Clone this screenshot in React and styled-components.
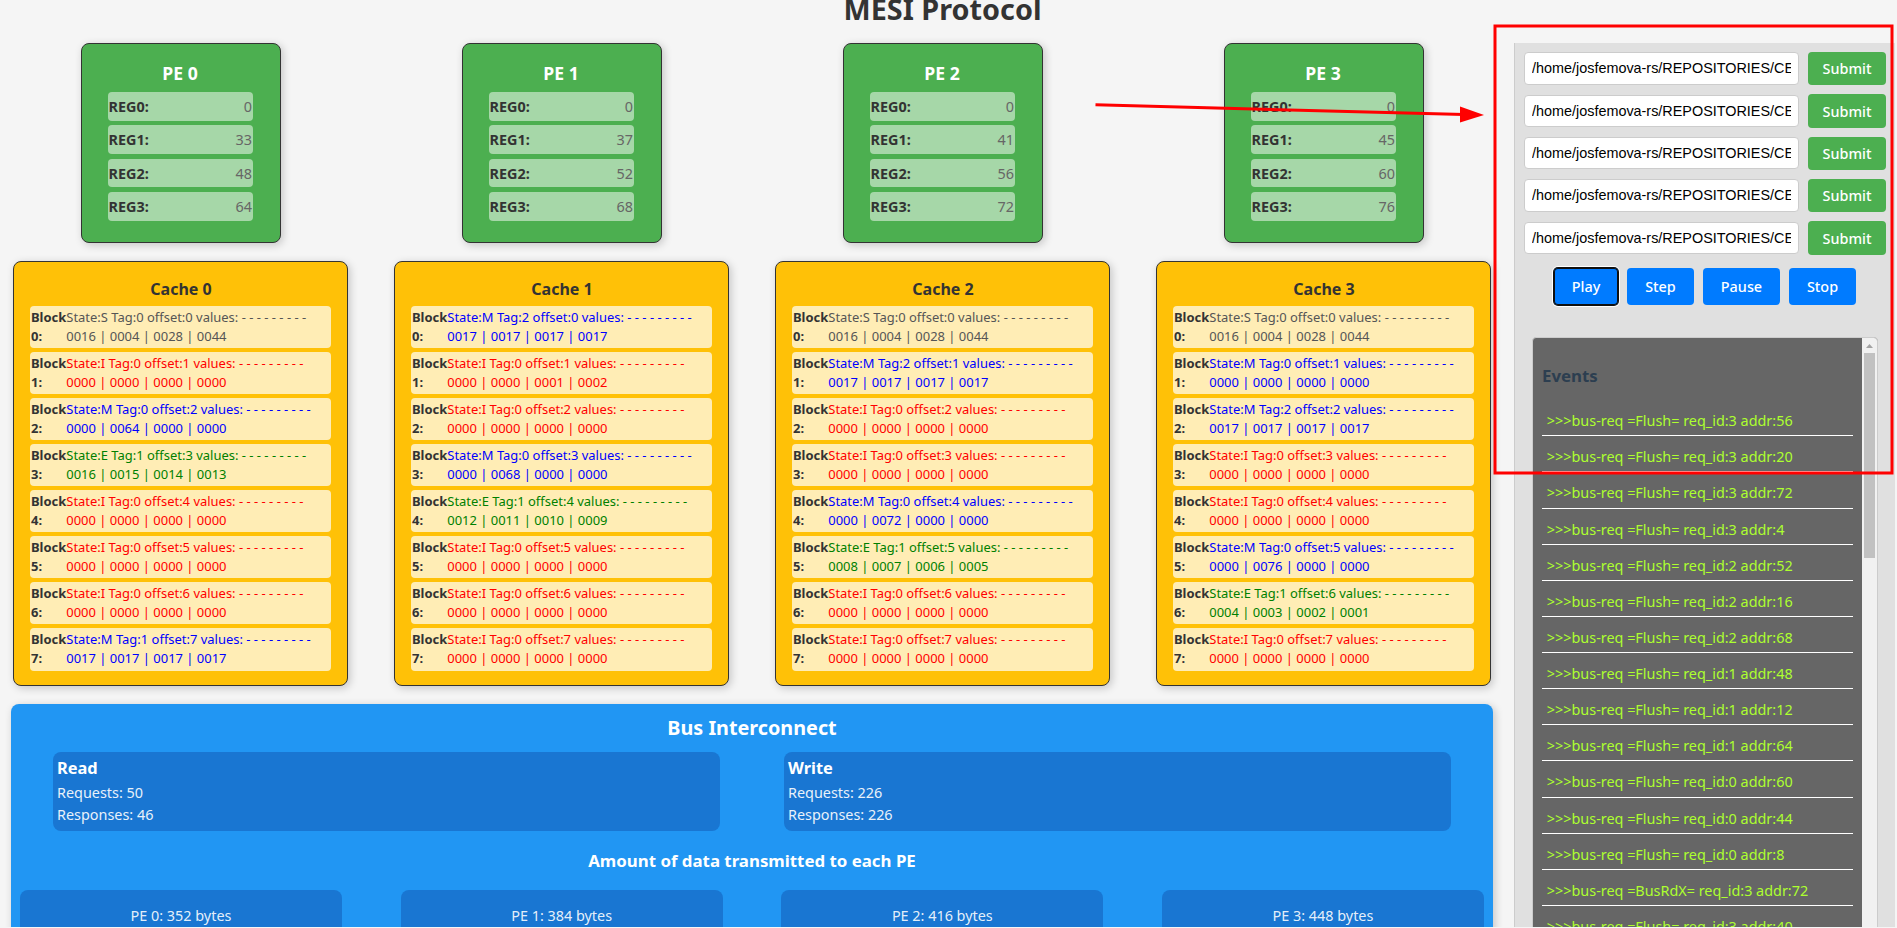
import React from "react";
import styled, { createGlobalStyle } from "styled-components";

const GlobalStyle = createGlobalStyle`
  *, *::before, *::after { box-sizing: border-box; }
  body {
    margin: 0;
    background: #f5f5f5;
    color: #333;
    font-family: "Noto Sans", sans-serif;
    overflow: hidden;
  }
  h1, h2, h3, p, ul { margin: 0; padding: 0; }
`;

const Page = styled.div`
  position: relative;
  width: 1897px;
  height: 928px;
  overflow: hidden;
  border-bottom: 1px solid #f5f5f5;
`;

const Title = styled.h1`
  width: 1885px;
  height: 43px;
  font-size: 28.8px;
  line-height: 40px;
  text-align: center;
  margin-top: -11px;
  margin-bottom: 11px;
`;

const Columns = styled.div`
  display: flex;
  align-items: flex-start;
`;

const Main = styled.main`
  width: 1482px;
  margin-left: 11px;
`;

const Processors = styled.section`
  display: flex;
  gap: 46px;
  padding-left: 2px;
  width: 1490px;
`;

const Processor = styled.article`
  flex: 0 0 335px;
  display: flex;
  flex-direction: column;
  align-items: center;
  gap: 18px;
`;

const Card = styled.div`
  border: 1px solid #333;
  border-radius: 8px;
  box-shadow: 2px 2px 8px rgba(0, 0, 0, 0.2);
`;

const PeCard = styled(Card)`
  width: 200px;
  height: 200px;
  padding: 16px 27px 0 26px;
  background: #4caf50;
`;

const PeTitle = styled.h2`
  height: 32.1px;
  font-size: 17.6px;
  line-height: 26px;
  color: #fff;
  text-align: center;
`;

const Register = styled.div`
  display: flex;
  justify-content: space-between;
  align-items: center;
  height: 28.6px;
  margin-bottom: 4.8px;
  padding: 0 0.5px 0 1px;
  border-radius: 4px;
  background: rgba(255, 255, 255, 0.5);
  font-size: 14.4px;
  color: #666;

  b { color: #333; }
`;

const CacheCard = styled(Card)`
  width: 335px;
  height: 425px;
  padding: 14px 16px 0;
  background: #ffc107;
`;

const CacheTitle = styled.h2`
  height: 29.8px;
  padding-left: 1px;
  font-size: 16px;
  line-height: 27px;
  text-align: center;
`;

const stateColors = { S: "#555", I: "#ff0000", M: "#0000ff", E: "#008000" };

const Block = styled.div`
  display: flex;
  height: 42.5px;
  margin-bottom: 3.54px;
  padding: 2px 1px;
  border-radius: 4px;
  background: rgba(255, 255, 255, 0.7);
  font-size: 12.96px;
  line-height: 19.2px;
`;

const BlockLabel = styled.b`
  flex: 0 0 35.3px;
`;

const BlockValue = styled.span`
  color: ${(p) => stateColors[p.$state]};
  white-space: nowrap;
`;

const Bus = styled.section`
  margin-top: 18px;
  height: 300px;
  padding: 8px 9px 0;
  border-radius: 8px;
  background: #2196f3;
  box-shadow: 2px 2px 8px rgba(0, 0, 0, 0.2);
  color: #fff;
`;

const BusTitle = styled.h2`
  height: 40px;
  font-size: 19.8px;
  line-height: 31px;
  text-align: center;
`;

const Traffic = styled.div`
  display: flex;
  gap: 64px;
  padding: 0 33px;
`;

const TrafficPanel = styled.div`
  flex: 1;
  height: 79px;
  padding: 4px;
  border-radius: 8px;
  background: #1976d2;
  font-size: 14.4px;
  line-height: 22px;

  h3 { height: 26px; font-size: 16.4px; line-height: 24px; }
  p { opacity: 0.9; }
`;

const TransferTitle = styled.h3`
  height: 59px;
  font-size: 16.85px;
  line-height: 60px;
  text-align: center;
`;

const Transfers = styled.div`
  display: flex;
  justify-content: space-between;
`;

const Transfer = styled.div`
  width: 322px;
  height: 60px;
  border-radius: 8px;
  background: #1976d2;
  color: rgba(255, 255, 255, 0.9);
  font-size: 14.4px;
  line-height: 52px;
  text-align: center;
`;

const Sidebar = styled.aside`
  width: 381px;
  height: 900px;
  margin-left: 21px;
  border-left: 1px solid #ccc;
  background: #e0e0e0;
`;

const PathForms = styled.div`
  display: flex;
  flex-direction: column;
  gap: 8.95px;
  padding: 9px 9px 0;
`;

const PathRow = styled.form`
  display: flex;
  justify-content: space-between;
  align-items: flex-start;
  height: 33.4px;
`;

const PathInput = styled.input`
  width: 275px;
  height: 32.4px;
  margin-top: 0.3px;
  padding: 0 7px;
  border: 1px solid #ccc;
  border-radius: 4px;
  background: #fff;
  color: #000;
  font: 14.4px "Liberation Sans", Arial, sans-serif;
  outline: none;
`;

const Button = styled.button`
  border: 0;
  border-radius: 4px;
  padding: 0;
  color: #fff;
  font: 500 14.4px "Noto Sans", sans-serif;
`;

const SubmitButton = styled(Button)`
  width: 78px;
  height: 33.4px;
  background: #4caf50;
`;

const Controls = styled.div`
  display: flex;
  gap: 9px;
  margin: 13.2px 0 0 39px;
`;

const ControlButton = styled(Button)`
  width: ${(p) => p.$width}px;
  height: 37px;
  background: #007bff;
  ${(p) => p.$focused && "box-shadow: 0 0 0 1px #101010, 0 0 0 2px #fff, inset 0 0 0 1px #101010;"}
`;

const EventPanel = styled.section`
  display: flex;
  width: 346px;
  height: 620px;
  margin: 32px 0 0 17px;
  border: 1px solid #ccc;
  border-radius: 4px;
  overflow: hidden;
  background: #666;
`;

const EventBody = styled.div`
  flex: 1;
  padding: 0 9px;
`;

const EventTitle = styled.h3`
  height: 62.3px;
  padding-top: 24px;
  color: #2c3e50;
  font-size: 16.85px;
  line-height: 28px;
`;

const EventItem = styled.li`
  height: 36.13px;
  padding-left: 4.8px;
  border-bottom: 1px solid #fff;
  color: #adff2f;
  font-size: 14.4px;
  line-height: 41.4px;
  list-style: none;
`;

const ScrollTrack = styled.div`
  width: 15px;
  background: #f1f1f1;
  display: flex;
  flex-direction: column;
  align-items: center;
`;

const ScrollArrow = styled.svg`
  display: block;
  width: 15px;
  height: 15px;
`;

const ScrollThumb = styled.div`
  width: 11px;
  height: 205px;
  background: #c1c1c1;
`;

const Annotation = styled.svg`
  position: absolute;
  inset: 0;
  pointer-events: none;
`;

const PATH = "/home/josfemova-rs/REPOSITORIES/CE4302-MESI/program.txt";

const processors = [
  { regs: [0, 33, 48, 64], bytes: 352, blocks: ["S0 16 4 28 44", "I0 0 0 0 0", "M0 0 64 0 0", "E1 16 15 14 13", "I0 0 0 0 0", "I0 0 0 0 0", "I0 0 0 0 0", "M1 17 17 17 17"] },
  { regs: [0, 37, 52, 68], bytes: 384, blocks: ["M2 17 17 17 17", "I0 0 0 1 2", "I0 0 0 0 0", "M0 0 68 0 0", "E1 12 11 10 9", "I0 0 0 0 0", "I0 0 0 0 0", "I0 0 0 0 0"] },
  { regs: [0, 41, 56, 72], bytes: 416, blocks: ["S0 16 4 28 44", "M2 17 17 17 17", "I0 0 0 0 0", "I0 0 0 0 0", "M0 0 72 0 0", "E1 8 7 6 5", "I0 0 0 0 0", "I0 0 0 0 0"] },
  { regs: [0, 45, 60, 76], bytes: 448, blocks: ["S0 16 4 28 44", "M0 0 0 0 0", "M2 17 17 17 17", "I0 0 0 0 0", "I0 0 0 0 0", "M0 0 76 0 0", "E1 4 3 2 1", "I0 0 0 0 0"] },
];

const events = [
  ["Flush", 3, 56], ["Flush", 3, 20], ["Flush", 3, 72], ["Flush", 3, 4],
  ["Flush", 2, 52], ["Flush", 2, 16], ["Flush", 2, 68], ["Flush", 1, 48],
  ["Flush", 1, 12], ["Flush", 1, 64], ["Flush", 0, 60], ["Flush", 0, 44],
  ["Flush", 0, 8], ["BusRdX", 3, 72], ["Flush", 3, 40],
];

function CacheBlock({ data, index }) {
  const [head, ...words] = data.split(" ");
  return (
    <Block>
      <BlockLabel>Block {index}:</BlockLabel>
      <BlockValue $state={head[0]}>
        {`State:${head[0]} Tag:${head[1]} offset:${index} values: - - - - - - - - -`}
        <br />
        {words.map((w) => w.padStart(4, "0")).join(" | ")}
      </BlockValue>
    </Block>
  );
}

export default function App() {
  return (
    <Page>
      <GlobalStyle />
      <Title>MESI Protocol</Title>
      <Columns>
        <Main>
          <Processors>
            {processors.map((pe, i) => (
              <Processor key={i}>
                <PeCard>
                  <PeTitle>PE {i}</PeTitle>
                  {pe.regs.map((v, r) => (
                    <Register key={r}><b>REG{r}:</b><span>{v}</span></Register>
                  ))}
                </PeCard>
                <CacheCard>
                  <CacheTitle>Cache {i}</CacheTitle>
                  {pe.blocks.map((b, n) => <CacheBlock key={n} data={b} index={n} />)}
                </CacheCard>
              </Processor>
            ))}
          </Processors>
          <Bus>
            <BusTitle>Bus Interconnect</BusTitle>
            <Traffic>
              <TrafficPanel><h3>Read</h3><p>Requests: 50</p><p>Responses: 46</p></TrafficPanel>
              <TrafficPanel><h3>Write</h3><p>Requests: 226</p><p>Responses: 226</p></TrafficPanel>
            </Traffic>
            <TransferTitle>Amount of data transmitted to each PE</TransferTitle>
            <Transfers>
              {processors.map((pe, i) => <Transfer key={i}>PE {i}: {pe.bytes} bytes</Transfer>)}
            </Transfers>
          </Bus>
        </Main>
        <Sidebar>
          <PathForms>
            {[0, 1, 2, 3, 4].map((n) => (
              <PathRow key={n}>
                <PathInput defaultValue={PATH} />
                <SubmitButton type="button">Submit</SubmitButton>
              </PathRow>
            ))}
          </PathForms>
          <Controls>
            <ControlButton $width={64} $focused>Play</ControlButton>
            <ControlButton $width={67}>Step</ControlButton>
            <ControlButton $width={77}>Pause</ControlButton>
            <ControlButton $width={67}>Stop</ControlButton>
          </Controls>
          <EventPanel>
            <EventBody>
              <EventTitle>Events</EventTitle>
              <ul>
                {events.map(([op, id, addr], n) => (
                  <EventItem key={n}>{`>>>bus-req =${op}= req_id:${id} addr:${addr}`}</EventItem>
                ))}
              </ul>
            </EventBody>
            <ScrollTrack>
              <ScrollArrow viewBox="0 0 15 15"><path d="M4 10L7.5 6L11 10Z" fill="#a3a3a3" /></ScrollArrow>
              <ScrollThumb />
            </ScrollTrack>
          </EventPanel>
        </Sidebar>
      </Columns>
      <Annotation width="1897" height="928" viewBox="0 0 1897 928">
        <rect x="1495" y="26" width="397" height="447" fill="none" stroke="#f00" strokeWidth="3" />
        <line x1="1095.5" y1="104.8" x2="1464" y2="114.5" stroke="#f00" strokeWidth="3" />
        <path d="M1460 106.5L1484 115L1460 122.5Z" fill="#f00" />
      </Annotation>
    </Page>
  );
}
